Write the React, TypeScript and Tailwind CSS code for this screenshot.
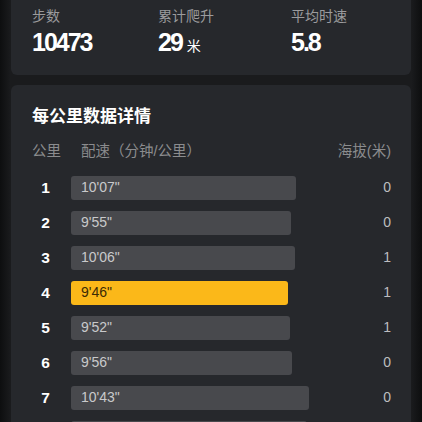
import React from "react";

const rows = [
  { km: 1, pace: "10'07\"", w: 225, alt: 0 },
  { km: 2, pace: "9'55\"", w: 220, alt: 0 },
  { km: 3, pace: "10'06\"", w: 224, alt: 1 },
  { km: 4, pace: "9'46\"", w: 217, alt: 1, best: true },
  { km: 5, pace: "9'52\"", w: 219, alt: 1 },
  { km: 6, pace: "9'56\"", w: 221, alt: 0 },
  { km: 7, pace: "10'43\"", w: 238, alt: 0 },
  { km: 8, pace: "10'38\"", w: 236, alt: 0 },
];

const font = { fontFamily: '"Liberation Sans", "Noto Sans CJK SC", sans-serif' };

export default function App() {
  return (
    <div
      className="w-[422px] h-[422px] overflow-hidden px-[11px] bg-[linear-gradient(90deg,#0d0e0f,#1a1b1d_2.5%,#1a1b1d_97.5%,#0d0e0f)]"
      style={font}
    >
      <div className="h-[75px] rounded-b-[6px] bg-[#26282c] pl-[21px] flex">
        <div className="w-[126px] pt-[6px]">
          <div className="text-[14px] leading-[20px] text-[#9b9b9d]">步数</div>
          <div className="text-[25px] leading-[28px] font-bold text-white tracking-[-2px] mt-[2px]">10473</div>
        </div>
        <div className="w-[133px] pt-[6px]">
          <div className="text-[14px] leading-[20px] text-[#9b9b9d]">累计爬升</div>
          <div className="flex items-baseline mt-[2px]">
            <span className="text-[25px] leading-[28px] font-bold text-white tracking-[-2px]">29</span>
            <span className="text-[14px] text-white ml-[5px]">米</span>
          </div>
        </div>
        <div className="pt-[6px]">
          <div className="text-[14px] leading-[20px] text-[#9b9b9d]">平均时速</div>
          <div className="text-[25px] leading-[28px] font-bold text-white tracking-[-2px] mt-[2px]">5.8</div>
        </div>
      </div>

      <div className="mt-[10px] rounded-[6px] bg-[#26282c] pl-[21px] pr-[20px] pt-[20px] pb-[10px]">
        <div className="text-[17px] leading-[24px] font-bold text-white">每公里数据详情</div>
        <div className="flex mt-[12px] mb-[9px] text-[14.5px] leading-[20px] text-[#8b8c8e]">
          <div className="w-[49px]">公里</div>
          <div>配速（分钟/公里）</div>
          <div className="ml-auto">海拔(米)</div>
        </div>
        {rows.map((r) => (
          <div key={r.km} className="h-[35px] flex items-center">
            <div className="w-[27px] text-center text-[15.5px] font-bold text-white">{r.km}</div>
            <div
              className={
                "ml-[12px] h-[24px] rounded-[3px] pl-[10px] flex items-center text-[14px] " +
                (r.best ? "bg-[#fbb819] text-[#3b2b05]" : "bg-[#48494d] text-[#c9c9cb]")
              }
              style={{ width: r.w }}
            >
              {r.pace}
            </div>
            <div className="ml-auto text-[14px] text-[#bdbdbf]">{r.alt}</div>
          </div>
        ))}
      </div>
    </div>
  );
}
